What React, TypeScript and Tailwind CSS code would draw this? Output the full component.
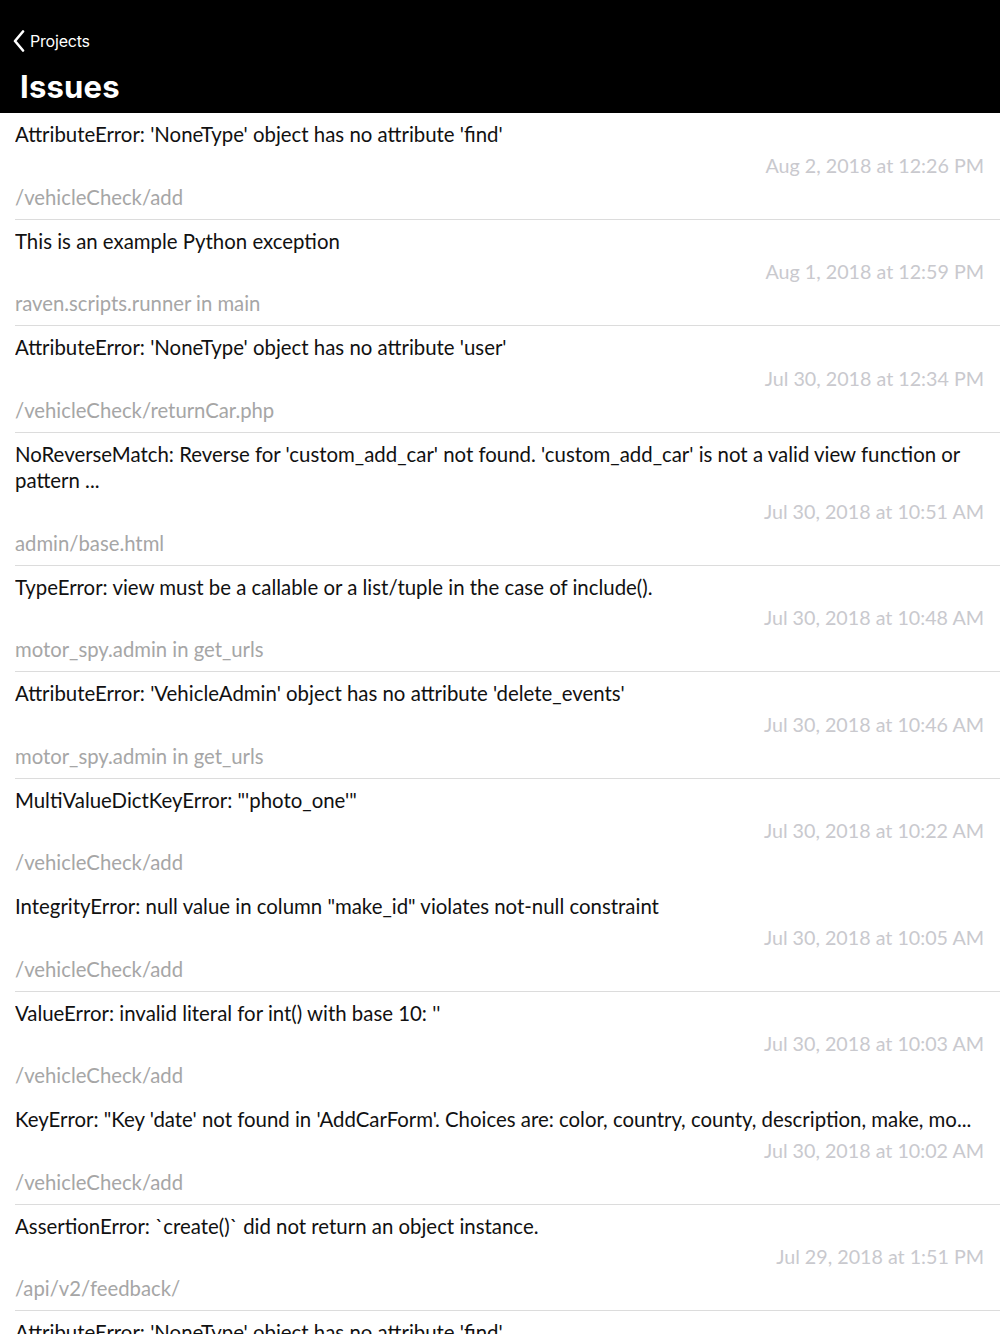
type Issue = {
  title: string;
  title2?: string;
  date: string;
  culprit: string;
  noLine?: boolean;
};

const issues: Issue[] = [
  {
    title: "AttributeError: 'NoneType' object has no attribute 'find'",
    date: "Aug 2, 2018 at 12:26 PM",
    culprit: "/vehicleCheck/add",
  },
  {
    title: "This is an example Python exception",
    date: "Aug 1, 2018 at 12:59 PM",
    culprit: "raven.scripts.runner in main",
  },
  {
    title: "AttributeError: 'NoneType' object has no attribute 'user'",
    date: "Jul 30, 2018 at 12:34 PM",
    culprit: "/vehicleCheck/returnCar.php",
  },
  {
    title:
      "NoReverseMatch: Reverse for 'custom_add_car' not found. 'custom_add_car' is not a valid view function or",
    title2: "pattern ...",
    date: "Jul 30, 2018 at 10:51 AM",
    culprit: "admin/base.html",
  },
  {
    title: "TypeError: view must be a callable or a list/tuple in the case of include().",
    date: "Jul 30, 2018 at 10:48 AM",
    culprit: "motor_spy.admin in get_urls",
  },
  {
    title: "AttributeError: 'VehicleAdmin' object has no attribute 'delete_events'",
    date: "Jul 30, 2018 at 10:46 AM",
    culprit: "motor_spy.admin in get_urls",
  },
  {
    title: "MultiValueDictKeyError: \"'photo_one'\"",
    date: "Jul 30, 2018 at 10:22 AM",
    culprit: "/vehicleCheck/add",
    noLine: true,
  },
  {
    title: "IntegrityError: null value in column \"make_id\" violates not-null constraint",
    date: "Jul 30, 2018 at 10:05 AM",
    culprit: "/vehicleCheck/add",
  },
  {
    title: "ValueError: invalid literal for int() with base 10: ''",
    date: "Jul 30, 2018 at 10:03 AM",
    culprit: "/vehicleCheck/add",
    noLine: true,
  },
  {
    title:
      "KeyError: \"Key 'date' not found in 'AddCarForm'. Choices are: color, country, county, description, make, mo...",
    date: "Jul 30, 2018 at 10:02 AM",
    culprit: "/vehicleCheck/add",
  },
  {
    title: "AssertionError: `create()` did not return an object instance.",
    date: "Jul 29, 2018 at 1:51 PM",
    culprit: "/api/v2/feedback/",
  },
  {
    title: "AttributeError: 'NoneType' object has no attribute 'find'",
    date: "Jul 29, 2018 at 1:40 PM",
    culprit: "/vehicleCheck/add",
  },
];

function IssueRow({ issue }: { issue: Issue }) {
  return (
    <div
      className={
        "ml-[15px] pr-[16px] pt-[8px] pb-[9px] " +
        (issue.noLine ? "border-b border-transparent" : "border-b border-[#dcdcdc]")
      }
    >
      <div className="text-[20.4px] leading-[26.5px] text-[#111] whitespace-nowrap overflow-hidden">
        {issue.title}
        {issue.title2 && (
          <>
            <br />
            {issue.title2}
          </>
        )}
      </div>
      <div className="mt-[5px] text-right text-[19.7px] leading-[26px] text-[#c9c9ce]">
        {issue.date}
      </div>
      <div className="mt-[5px] text-[20.3px] leading-[26px] text-[#a6a6a6]">
        {issue.culprit}
      </div>
    </div>
  );
}

export default function App() {
  return (
    <div className="w-[1000px] h-[1334px] overflow-hidden bg-white">
      <div className="h-[113px] bg-black text-white font-['Inter',sans-serif] pt-[28px]">
        <div className="flex items-center pl-[13px] h-[26px] gap-[5px]">
          <svg width="12" height="22" viewBox="0 0 12 22" fill="none">
            <path
              d="M10 1.5 L2 11 L10 20.5"
              stroke="white"
              strokeWidth="2.6"
              strokeLinecap="round"
              strokeLinejoin="round"
            />
          </svg>
          <span className="text-[16px] tracking-[-0.2px]">Projects</span>
        </div>
        <h1 className="pl-[20px] mt-[13px] text-[31px] leading-[40px] font-bold tracking-[0.2px]">
          Issues
        </h1>
      </div>
      <div className="font-['Lato','Noto_Sans',sans-serif]">
        {issues.map((issue, i) => (
          <IssueRow key={i} issue={issue} />
        ))}
      </div>
    </div>
  );
}
